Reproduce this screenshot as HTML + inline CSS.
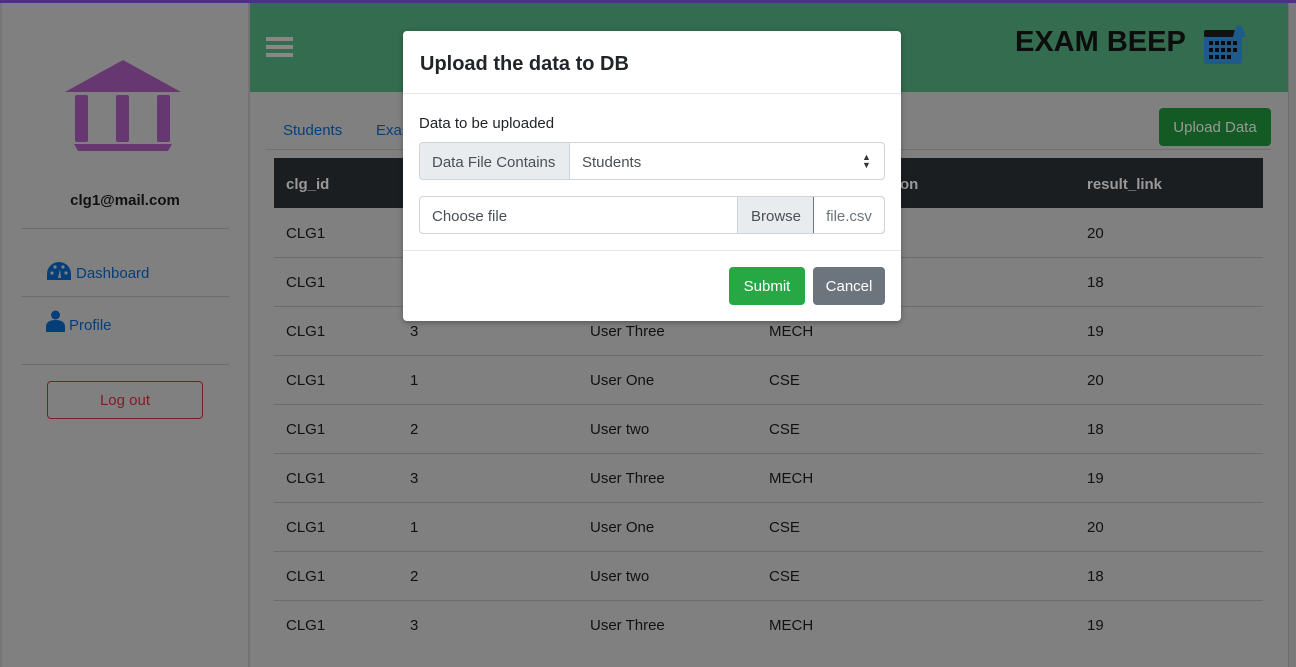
<!DOCTYPE html>
<html><head><meta charset="utf-8"><style>
*{box-sizing:border-box;margin:0;padding:0}
body{width:1296px;height:667px;overflow:hidden;background:#808080;font-family:"Liberation Sans","DejaVu Sans",sans-serif;font-size:15px;color:#111;position:relative}
.a{position:absolute}
.topline{left:0;top:0;width:1296px;height:3px;background:#4e2f86}
.side{left:0;top:3px;width:250px;height:664px;background:#808080;border-left:2px solid #767676;border-right:2px solid #737373}
.hdr{left:250px;top:3px;width:1038px;height:89px;background:#346c4f}
.scroll{left:1288px;top:3px;width:8px;height:664px;background:#7a7a7a;border-left:1px solid #6e6e6e}
.hl{height:1px;background:#6c6c6c}
.td{font-size:15px;color:#111;white-space:nowrap}
.modal{left:403px;top:31px;width:498px;height:290px;background:#fff;border-radius:4px;box-shadow:0 2px 6px rgba(0,0,0,.3)}
.modal .t{left:17px;top:22px;font-size:20px;color:#212529;font-weight:600}
.bd{border:1px solid #ced4da}
</style></head><body>
<div class="a topline"></div>
<div class="a side"></div>
<div class="a hdr"></div>
<div class="a scroll"></div>
<div class="a" style="left:266px;top:37px;width:27px;height:4px;background:#888"></div>
<div class="a" style="left:266px;top:45px;width:27px;height:4px;background:#888"></div>
<div class="a" style="left:266px;top:53px;width:27px;height:4px;background:#888"></div>
<div class="a" style="left:1015px;top:26px;font-size:29px;color:#0d0d0d;font-weight:600">EXAM BEEP</div>
<svg class="a" style="left:1201px;top:20px" width="50" height="46" viewBox="0 0 50 46">
<rect x="3" y="10" width="38" height="34" rx="3" fill="#1e5a8a"/>
<rect x="3" y="10" width="38" height="7" rx="2" fill="#111"/>
<g fill="#0a0a0a"><rect x="8" y="21" width="4" height="4"/><rect x="14" y="21" width="4" height="4"/><rect x="20" y="21" width="4" height="4"/><rect x="26" y="21" width="4" height="4"/><rect x="32" y="21" width="4" height="4"/>
<rect x="8" y="28" width="4" height="4"/><rect x="14" y="28" width="4" height="4"/><rect x="20" y="28" width="4" height="4"/><rect x="26" y="28" width="4" height="4"/><rect x="32" y="28" width="4" height="4"/>
<rect x="8" y="35" width="4" height="4"/><rect x="14" y="35" width="4" height="4"/><rect x="20" y="35" width="4" height="4"/><rect x="26" y="35" width="4" height="4"/></g>
<path d="M32 17 L34 9 Q38 1 42 9 L45 17 Z" fill="#1e5a8a"/>
</svg>
<svg class="a" style="left:64px;top:60px" width="118" height="92" viewBox="0 0 118 92">
<polygon points="59,0 117,32 1,32" fill="#673772"/>
<rect x="11" y="35" width="13" height="47" rx="2" fill="#673772"/>
<rect x="52" y="35" width="13" height="47" rx="2" fill="#673772"/>
<rect x="93" y="35" width="13" height="47" rx="2" fill="#673772"/>
<polygon points="10,84 108,84 104,91 14,91" fill="#673772"/>
</svg>
<div class="a" style="left:0;width:250px;top:192px;text-align:center;font-weight:bold;font-size:15px;color:#111">clg1@mail.com</div>
<div class="a hl" style="left:21px;top:228px;width:208px"></div>
<div class="a hl" style="left:21px;top:296px;width:208px"></div>
<div class="a hl" style="left:21px;top:364px;width:208px"></div>
<svg class="a" style="left:46px;top:261px" width="26" height="20" viewBox="0 0 26 20"><path d="M13 1A12 12 0 0 0 1 13v6h24v-6A12 12 0 0 0 13 1z" fill="#063e7a"/><circle cx="6" cy="12" r="1.6" fill="#808080"/><circle cx="9" cy="6" r="1.6" fill="#808080"/><circle cx="17" cy="6" r="1.6" fill="#808080"/><circle cx="20" cy="12" r="1.6" fill="#808080"/><path d="M12 17l2-9 1 9z" fill="#808080"/></svg>
<div class="a" style="left:76px;top:265px;color:#063e7a">Dashboard</div>
<svg class="a" style="left:46px;top:310px" width="19" height="22" viewBox="0 0 19 22"><circle cx="9.5" cy="5" r="4.5" fill="#063e7a"/><path d="M0 22v-5q0-7 9.5-7T19 17v5z" fill="#063e7a"/></svg>
<div class="a" style="left:69px;top:317px;color:#063e7a">Profile</div>
<div class="a" style="left:47px;top:381px;width:156px;height:38px;border:1px solid #801c26;border-radius:4px;text-align:center;line-height:38px;color:#801c26">Log out</div>
<div class="a" style="left:283px;top:122px;color:#063e7a">Students</div>
<div class="a" style="left:376px;top:122px;color:#063e7a">Exams</div>
<div class="a hl" style="left:266px;top:149px;width:1005px;background:#707070"></div>
<div class="a" style="left:1159px;top:108px;width:112px;height:38px;background:#145a25;border-radius:4px;color:#999;text-align:center;line-height:40px">Upload Data</div>
<div class="a" style="left:274px;top:158px;width:989px;height:50px;background:#1b1e21"></div>
<div class="a" style="left:286px;top:176px;font-weight:bold;color:#999">clg_id</div>
<div class="a" style="left:900px;top:176px;font-weight:bold;color:#999">on</div>
<div class="a" style="left:1087px;top:176px;font-weight:bold;color:#999">result_link</div>
<div id="rows"></div>
<script>
var d=[["1","User One","CSE","20"],["2","User two","CSE","18"],["3","User Three","MECH","19"]],h="";
for(var i=0;i<9;i++){var y=208+i*49,r=d[i%3];
if(i>0)h+='<div class="a hl" style="left:274px;top:'+y+'px;width:989px"></div>';
var ty=y+17;
h+='<div class="a td" style="left:286px;top:'+ty+'px">CLG1</div><div class="a td" style="left:410px;top:'+ty+'px">'+r[0]+'</div><div class="a td" style="left:590px;top:'+ty+'px">'+r[1]+'</div><div class="a td" style="left:769px;top:'+ty+'px">'+r[2]+'</div><div class="a td" style="left:1087px;top:'+ty+'px">'+r[3]+'</div>';}
document.getElementById('rows').innerHTML=h;
</script>
<div class="a modal">
<div class="a t">Upload the data to DB</div>
<div class="a" style="left:0;top:62px;width:498px;height:1px;background:#e5e5e5"></div>
<div class="a" style="left:16px;top:84px;color:#212529">Data to be uploaded</div>
<div class="a bd" style="left:16px;top:111px;width:466px;height:38px;border-radius:4px;overflow:hidden">
 <div class="a" style="left:0;top:0;width:150px;height:36px;background:#e9ecef;border-right:1px solid #ced4da;color:#495057;line-height:39px;padding-left:12px">Data File Contains</div>
 <div class="a" style="left:162px;top:0;line-height:39px;color:#495057">Students</div>
 <div class="a" style="left:442px;top:10px;font-size:9px;line-height:8px;color:#333">▲<br>▼</div>
</div>
<div class="a bd" style="left:16px;top:165px;width:466px;height:38px;border-radius:4px;overflow:hidden">
 <div class="a" style="left:12px;top:0;line-height:39px;color:#495057">Choose file</div>
 <div class="a" style="left:317px;top:0;width:77px;height:36px;background:#e9ecef;border-left:1px solid #ced4da;line-height:39px;text-align:center;color:#495057">Browse</div>
 <div class="a" style="left:393px;top:-1px;width:72px;height:38px;border:1px solid #6c757d;border-radius:0 4px 4px 0;line-height:40px;text-align:center;color:#6c757d">file.csv</div>
</div>
<div class="a" style="left:0;top:219px;width:498px;height:1px;background:#e5e5e5"></div>
<div class="a" style="left:326px;top:236px;width:76px;height:38px;background:#28a745;border-radius:4px;color:#fff;text-align:center;line-height:40px">Submit</div>
<div class="a" style="left:410px;top:236px;width:72px;height:38px;background:#6c757d;border-radius:4px;color:#fff;text-align:center;line-height:40px">Cancel</div>
</div>
</body></html>
